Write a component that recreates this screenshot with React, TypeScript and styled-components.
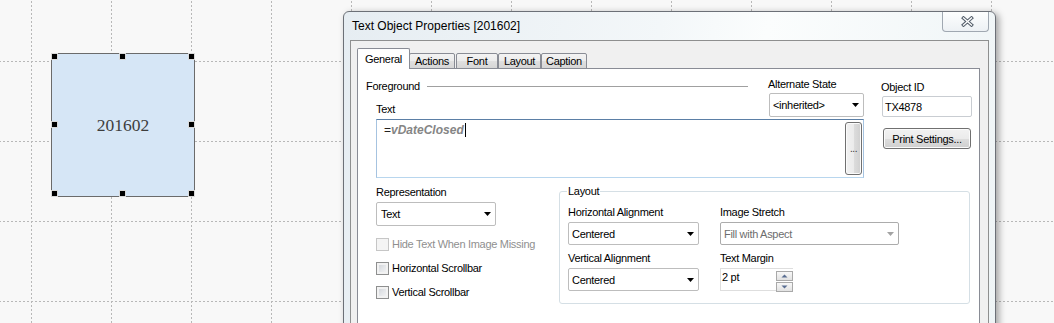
import React from "react";
import styled, { createGlobalStyle } from "styled-components";

const GlobalStyle = createGlobalStyle`
  html, body { margin: 0; padding: 0; background: #f8f8f8; overflow: hidden; }
  * { box-sizing: border-box; }
`;

const Canvas = styled.div`
  position: relative;
  width: 1054px;
  height: 323px;
  overflow: hidden;
  background: #f8f8f8;
  font-family: "Liberation Sans", Arial, sans-serif;
`;

const GridLayer = styled.svg`
  position: absolute;
  left: 0;
  top: 0;
`;

const TextObject = styled.div`
  position: absolute;
  left: 51px;
  top: 53px;
  width: 144px;
  height: 144px;
  border: 1px solid #6b6b6b;
  background: #d6e6f6;
  display: flex;
  align-items: center;
  justify-content: center;
  font-family: "Liberation Serif", "Times New Roman", serif;
  font-size: 17.5px;
  color: #3d3d3d;
`;

const Handle = styled.span<{ $x: number; $y: number }>`
  position: absolute;
  left: ${(p) => p.$x}px;
  top: ${(p) => p.$y}px;
  width: 7px;
  height: 7px;
  background: #000;
  border: 1px solid #d9d9d9;
`;

const Dialog = styled.div`
  position: absolute;
  left: 343px;
  top: 11px;
  width: 653px;
  height: 340px;
  border: 1px solid #6c7077;
  border-radius: 6px 6px 0 0;
  background: linear-gradient(100deg, #e6edf2 0%, #f3f7f9 45%, #fbfdfd 60%, #eef4f6 100%);
  box-shadow: 3px 2px 7px rgba(0, 0, 0, 0.35);
  display: flex;
  flex-direction: column;
  padding: 0 6px;
  font-family: "Liberation Sans", Arial, sans-serif;
`;

const TitleBar = styled.div`
  height: 28px;
  flex: none;
  display: flex;
  justify-content: space-between;
  align-items: flex-start;
`;

const Title = styled.div`
  align-self: center;
  padding-left: 2px;
  font-size: 12px;
  color: #000;
`;

const CloseButton = styled.div`
  width: 47px;
  height: 20px;
  border: 1px solid #a0a8b1;
  border-top: none;
  border-radius: 0 0 4px 4px;
  background: linear-gradient(#fdfefe, #edf1f4);
  display: flex;
  align-items: center;
  justify-content: center;
  padding-left: 3px;
`;

const Body = styled.div`
  flex: 1;
  min-height: 0;
  display: flex;
  flex-direction: column;
  border: 1px solid #8e8f8f;
  background: #f0f0f0;
  padding: 7px 8px 0 6px;
`;

const TabStrip = styled.div`
  display: flex;
  align-items: flex-end;
  height: 21px;
  flex: none;
  margin-bottom: -1px;
  position: relative;
  z-index: 1;
`;

const Tab = styled.div<{ $w: number; $ml?: number; $active?: boolean }>`
  width: ${(p) => p.$w}px;
  margin-left: ${(p) => p.$ml ?? 0}px;
  height: ${(p) => (p.$active ? 21 : 16)}px;
  border: 1px solid #898c95;
  border-bottom: ${(p) => (p.$active ? "none" : "1px solid #898c95")};
  border-radius: 2px 2px 0 0;
  background: ${(p) =>
    p.$active
      ? "#fff"
      : "linear-gradient(#f3f3f3 0%, #ececec 50%, #e0e0e0 51%, #d6d6d6 100%)"};
  display: flex;
  align-items: center;
  justify-content: center;
  padding-bottom: ${(p) => (p.$active ? 1 : 0)}px;
  font-size: 11px;
  letter-spacing: -0.3px;
  color: #000;
`;

const Panel = styled.div`
  flex: 1;
  background: #fff;
  border: 1px solid #898c95;
  padding: 9px 0 0 8px;
`;

const TopRow = styled.div`
  display: flex;
  align-items: flex-start;
`;

const MainCol = styled.div`
  width: 498px;
  display: flex;
  flex-direction: column;
`;

const HeaderRow = styled.div`
  display: flex;
  align-items: flex-start;
`;

const ForegroundCol = styled.div`
  flex: 1;
  padding-top: 2px;
  display: flex;
  flex-direction: column;
`;

const SectionHead = styled.div`
  display: flex;
  align-items: center;
  height: 13px;
`;

const Rule = styled.div`
  flex: 1;
  height: 1px;
  margin: 0 2px 0 7px;
  background: #a0a0a0;
`;

const Label = styled.div<{ $mt?: number; $ml?: number; $muted?: boolean }>`
  margin-top: ${(p) => p.$mt ?? 0}px;
  margin-left: ${(p) => p.$ml ?? 0}px;
  font-size: 11px;
  line-height: 13px;
  height: 13px;
  letter-spacing: -0.3px;
  white-space: nowrap;
  color: ${(p) => (p.$muted ? "#8f8f8f" : "#000")};
`;

const AltCol = styled.div`
  width: 95px;
  margin-left: 19px;
  display: flex;
  flex-direction: column;
`;

const Combo = styled.div<{ $w: number; $h: number; $mt?: number; $pl?: number; $disabled?: boolean }>`
  width: ${(p) => p.$w}px;
  height: ${(p) => p.$h}px;
  margin-top: ${(p) => p.$mt ?? 0}px;
  flex: none;
  display: flex;
  align-items: center;
  justify-content: space-between;
  padding: 0 4px 0 ${(p) => p.$pl ?? 3}px;
  border: 1px solid ${(p) => (p.$disabled ? "#acacac" : "#bdbdbd")};
  border-radius: 2px;
  background: #fff;
  font-size: 11px;
  letter-spacing: -0.3px;
  white-space: nowrap;
  color: ${(p) => (p.$disabled ? "#6d6d6d" : "#000")};
`;

const ExprBox = styled.div`
  margin: 2px 0 0 10px;
  width: 488px;
  height: 59px;
  display: flex;
  padding: 2px 1px 2px 7px;
  background: #fff;
  border: 1px solid;
  border-color: #5b7fa6 #a6c3e0 #b8d6ee #a6c3e0;
`;

const ExprText = styled.div`
  flex: 1;
  padding-top: 1px;
  font-size: 12px;
  line-height: 14px;
  color: #222;
  white-space: nowrap;
`;

const VarName = styled.span`
  font-style: italic;
  font-weight: bold;
  color: #858585;
`;

const Caret = styled.span`
  display: inline-block;
  width: 1px;
  height: 14px;
  margin-left: 1px;
  vertical-align: top;
  background: #000;
`;

const EllipsisButton = styled.div`
  width: 17px;
  border: 1px solid #707070;
  border-radius: 3px;
  background: linear-gradient(to right, #f2f2f2 0%, #ebebeb 50%, #dddddd 51%, #cfcfcf 100%);
  box-shadow: inset 0 0 0 1px #fbfbfb;
  display: flex;
  align-items: center;
  justify-content: center;
  font-size: 10px;
  color: #333;
  letter-spacing: -0.5px;
`;

const SideCol = styled.div`
  width: 91px;
  margin-left: 17px;
  display: flex;
  flex-direction: column;
`;

const TextField = styled.div`
  margin: 2px 0 0 1px;
  width: 90px;
  height: 21px;
  display: flex;
  align-items: center;
  padding-left: 2px;
  border: 1px solid #c9cdd2;
  border-radius: 2px;
  background: #fff;
  font-size: 11px;
  letter-spacing: -0.3px;
  color: #000;
`;

const PushButton = styled.div`
  margin: 11px 0 0 2px;
  width: 88px;
  height: 21px;
  display: flex;
  align-items: center;
  justify-content: center;
  border: 1px solid #707070;
  border-radius: 3px;
  background: linear-gradient(#f2f2f2 0%, #ebebeb 50%, #dddddd 51%, #cfcfcf 100%);
  box-shadow: inset 0 0 0 1px #fbfbfb;
  font-size: 11px;
  letter-spacing: -0.3px;
  color: #000;
`;

const LowerRow = styled.div`
  margin-top: 8px;
  display: flex;
  align-items: flex-start;
`;

const LeftLower = styled.div`
  width: 193px;
  padding-left: 10px;
  display: flex;
  flex-direction: column;
`;

const CheckRow = styled.div<{ $mt?: number }>`
  margin-top: ${(p) => p.$mt ?? 0}px;
  height: 24px;
  display: flex;
  align-items: center;
  gap: 3px;
`;

const CheckBox = styled.span<{ $disabled?: boolean }>`
  width: 13px;
  height: 13px;
  flex: none;
  border: 1px solid ${(p) => (p.$disabled ? "#c6c6c6" : "#8e8f8f")};
  background: ${(p) =>
    p.$disabled ? "#f4f4f4" : "linear-gradient(135deg, #cbcfd5 0%, #e4e6e9 50%, #f7f7f7 100%)"};
  box-shadow: inset 0 0 0 2px ${(p) => (p.$disabled ? "#f4f4f4" : "#f2f2f2")};
`;

const GroupBox = styled.fieldset`
  margin: -1px 0 0 0;
  width: 411px;
  min-width: 0;
  padding: 8px 0 12px 8px;
  border: 1px solid #d5dfe5;
  border-radius: 3px;
`;

const GroupLegend = styled.legend`
  margin-left: -1px;
  padding: 0 1px;
  font-size: 11px;
  line-height: 13px;
  letter-spacing: -0.3px;
  color: #000;
`;

const GroupCols = styled.div`
  display: flex;
  gap: 21px;
`;

const FieldCol = styled.div<{ $w: number }>`
  width: ${(p) => p.$w}px;
  display: flex;
  flex-direction: column;
`;

const Spinner = styled.div`
  margin-top: 3px;
  width: 73px;
  height: 23px;
  display: flex;
  align-items: flex-start;
  border: 1px solid #dedede;
  border-right: none;
  background: #fff;
  padding: 1px 0 0 1px;
  font-size: 11px;
  letter-spacing: -0.3px;
  color: #000;
`;

const SpinValue = styled.div`
  flex: 1;
  line-height: 13px;
  padding-top: 1px;
`;

const SpinCol = styled.div`
  display: flex;
  flex-direction: column;
  gap: 1px;
  margin-top: 1px;
`;

const SpinBtn = styled.div`
  width: 17px;
  height: 10px;
  border: 1px solid #a9a9a9;
  background: linear-gradient(#f8f8f8, #e2e2e2);
  display: flex;
  align-items: center;
  justify-content: center;
`;

const Arrow = ({ disabled }: { disabled?: boolean }) => (
  <svg width="7" height="4" viewBox="0 0 7 4">
    <polygon points="0,0 7,0 3.5,4" fill={disabled ? "#a3a3a3" : "#000"} />
  </svg>
);

const SpinArrow = ({ up }: { up?: boolean }) => (
  <svg width="7" height="4" viewBox="0 0 7 4">
    <polygon points={up ? "0.5,3.5 6.5,3.5 3.5,0.5" : "0.5,0.5 6.5,0.5 3.5,3.5"} fill="#5a6e92" />
  </svg>
);

const CloseGlyph = () => (
  <svg width="13" height="11" viewBox="0 0 13 11">
    <g strokeLinecap="square">
      <path d="M2.5 2 L10.5 9 M10.5 2 L2.5 9" stroke="#56606c" strokeWidth="3.4" />
      <path d="M2.5 2 L10.5 9 M10.5 2 L2.5 9" stroke="#ffffff" strokeWidth="1.3" />
    </g>
  </svg>
);

const tabs = [
  { label: "General", w: 53, ml: 0, active: true },
  { label: "Actions", w: 46, ml: -1 },
  { label: "Font", w: 42, ml: 1 },
  { label: "Layout", w: 43, ml: 0 },
  { label: "Caption", w: 46, ml: 0 },
];

const handles = [
  [-1, -1],
  [67, -1],
  [136, -1],
  [-1, 67],
  [136, 67],
  [-1, 136],
  [67, 136],
  [136, 136],
];

export default function App() {
  return (
    <Canvas>
      <GlobalStyle />
      <GridLayer width="1054" height="323">
        <defs>
          <pattern id="grid" x="31" y="61" width="80" height="80" patternUnits="userSpaceOnUse">
            <line x1="0.5" y1="0" x2="0.5" y2="80" stroke="#b8b8b8" strokeWidth="1" strokeDasharray="2 2" />
            <line x1="0" y1="0.5" x2="80" y2="0.5" stroke="#b8b8b8" strokeWidth="1" strokeDasharray="2 2" />
          </pattern>
        </defs>
        <rect width="1054" height="323" fill="url(#grid)" />
      </GridLayer>

      <TextObject>
        201602
        {handles.map(([x, y], i) => (
          <Handle key={i} $x={x} $y={y} />
        ))}
      </TextObject>

      <Dialog>
        <TitleBar>
          <Title>Text Object Properties [201602]</Title>
          <CloseButton>
            <CloseGlyph />
          </CloseButton>
        </TitleBar>
        <Body>
          <TabStrip>
            {tabs.map((t) => (
              <Tab key={t.label} $w={t.w} $ml={t.ml} $active={t.active}>
                {t.label}
              </Tab>
            ))}
          </TabStrip>
          <Panel>
            <TopRow>
              <MainCol>
                <HeaderRow>
                  <ForegroundCol>
                    <SectionHead>
                      <Label>Foreground</Label>
                      <Rule />
                    </SectionHead>
                    <Label $mt={10} $ml={10}>
                      Text
                    </Label>
                  </ForegroundCol>
                  <AltCol>
                    <Label $ml={-1}>Alternate State</Label>
                    <Combo $w={95} $h={24} $mt={2}>
                      &lt;inherited&gt;
                      <Arrow />
                    </Combo>
                  </AltCol>
                </HeaderRow>
                <ExprBox>
                  <ExprText>
                    =<VarName>vDateClosed</VarName>
                    <Caret />
                  </ExprText>
                  <EllipsisButton>...</EllipsisButton>
                </ExprBox>
              </MainCol>
              <SideCol>
                <Label $mt={3}>Object ID</Label>
                <TextField>TX4878</TextField>
                <PushButton>Print Settings...</PushButton>
              </SideCol>
            </TopRow>

            <LowerRow>
              <LeftLower>
                <Label>Representation</Label>
                <Combo $w={120} $h={24} $mt={3} $pl={4}>
                  Text
                  <Arrow />
                </Combo>
                <CheckRow $mt={6}>
                  <CheckBox $disabled />
                  <Label $muted>Hide Text When Image Missing</Label>
                </CheckRow>
                <CheckRow>
                  <CheckBox />
                  <Label>Horizontal Scrollbar</Label>
                </CheckRow>
                <CheckRow>
                  <CheckBox />
                  <Label>Vertical Scrollbar</Label>
                </CheckRow>
              </LeftLower>

              <GroupBox>
                <GroupLegend>Layout</GroupLegend>
                <GroupCols>
                  <FieldCol $w={131}>
                    <Label>Horizontal Alignment</Label>
                    <Combo $w={131} $h={23} $mt={3}>
                      Centered
                      <Arrow />
                    </Combo>
                    <Label $mt={7}>Vertical Alignment</Label>
                    <Combo $w={131} $h={23} $mt={3}>
                      Centered
                      <Arrow />
                    </Combo>
                  </FieldCol>
                  <FieldCol $w={179}>
                    <Label>Image Stretch</Label>
                    <Combo $w={179} $h={23} $mt={3} $disabled>
                      Fill with Aspect
                      <Arrow disabled />
                    </Combo>
                    <Label $mt={7}>Text Margin</Label>
                    <Spinner>
                      <SpinValue>2 pt</SpinValue>
                      <SpinCol>
                        <SpinBtn>
                          <SpinArrow up />
                        </SpinBtn>
                        <SpinBtn>
                          <SpinArrow />
                        </SpinBtn>
                      </SpinCol>
                    </Spinner>
                  </FieldCol>
                </GroupCols>
              </GroupBox>
            </LowerRow>
          </Panel>
        </Body>
      </Dialog>
    </Canvas>
  );
}
